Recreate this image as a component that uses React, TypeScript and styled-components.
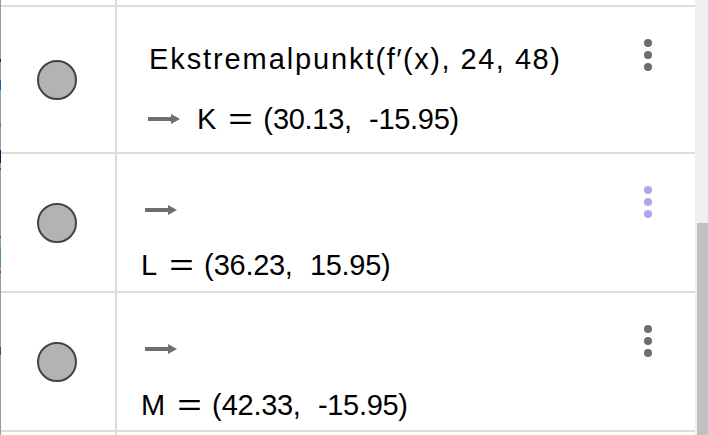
import styled, { createGlobalStyle } from 'styled-components';

const GlobalStyle = createGlobalStyle`
  html, body {
    margin: 0;
    padding: 0;
    background: #ffffff;
    overflow: hidden;
  }
  body {
    font-family: 'Liberation Sans', Arial, sans-serif;
  }
`;

const StyledView = styled.div`
  width: 708px;
  height: 435px;
  display: flex;
  overflow: hidden;
  background: #ffffff;
`;

const GraphEdge = styled.div`
  width: 1px;
  flex: none;
  background: linear-gradient(
    to bottom,
    #9c9c9c 0 59px,
    #14205a 59px 62px,
    #9c9c9c 62px 80px,
    #1d5fa8 80px 90px,
    #9c9c9c 90px 123px,
    #3e8f92 123px 127px,
    #9c9c9c 127px 150px,
    #0f1a50 150px 163px,
    #9c9c9c 163px 168px,
    #d02020 168px 170px,
    #9c9c9c 170px 236px,
    #d02020 236px 238px,
    #9c9c9c 238px 247px,
    #4d8fa0 247px 267px,
    #9c9c9c 267px 271px,
    #d02020 271px 273px,
    #9c9c9c 273px 347px,
    #1d4fa0 347px 355px,
    #9c9c9c 355px
  );
`;

const List = styled.div`
  flex: 1;
  display: flex;
  flex-direction: column;
`;

const Row = styled.div<{ $height: number }>`
  display: flex;
  height: ${({ $height }) => $height}px;
  flex: none;
  border-bottom: 2px solid #dcdcdc;

  &:last-child {
    border-bottom: none;
    flex: 1;
  }
`;

const MarbleCell = styled.div`
  width: 114px;
  flex: none;
  display: flex;
  align-items: center;
  justify-content: center;
  border-right: 2px solid #dcdcdc;
`;

const Marble = styled.div`
  width: 40px;
  height: 40px;
  box-sizing: border-box;
  border-radius: 50%;
  background: #b3b3b3;
  border: 2.5px solid #434343;
  margin-right: 2px;
`;

const Content = styled.div<{ $top: number }>`
  flex: 1;
  display: flex;
  flex-direction: column;
  padding: ${({ $top }) => $top}px 0 0 24px;
  font-size: 29px;
  line-height: 34px;
  color: #000000;
`;

const Line = styled.div<{ $indent?: number; $gap?: number }>`
  height: 34px;
  display: flex;
  align-items: center;
  white-space: pre;
  padding-left: ${({ $indent }) => $indent ?? 0}px;
  margin-top: ${({ $gap }) => $gap ?? 0}px;
`;

const Word = styled.span`
  letter-spacing: 1.9px;
`;

const Args = styled.span`
  letter-spacing: 1.5px;
`;

const Num = styled.span`
  letter-spacing: -0.3px;
`;

const Eq = styled.span`
  display: inline-block;
  margin: 0 14px 0 16px;
  transform: scaleX(1.45);
`;

const Sep = styled.span`
  margin-right: 17px;
`;

const ArrowWrap = styled.span`
  display: inline-flex;
  margin-right: 17px;
`;

const MenuCell = styled.div`
  width: 94px;
  flex: none;
  display: flex;
  flex-direction: column;
  align-items: center;
  padding-top: 32px;
  gap: 4px;
`;

const Dot = styled.span<{ $active?: boolean }>`
  width: 8px;
  height: 8px;
  border-radius: 50%;
  background: ${({ $active }) => ($active ? '#b0a6ec' : '#6d6d6d')};
`;

const Scrollbar = styled.div`
  width: 13px;
  flex: none;
  background: #f0f0f0;
  display: flex;
  flex-direction: column;
  align-items: flex-end;
`;

const Thumb = styled.div`
  width: 11px;
  margin-top: 223px;
  flex: 1;
  background: #c1c1c1;
`;

function Arrow() {
  return (
    <ArrowWrap>
      <svg width="32" height="12" viewBox="0 0 32 12">
        <rect x="0" y="4" width="24" height="4" fill="#6e6e6e" />
        <polygon points="23,1 32,6 23,11" fill="#6e6e6e" />
      </svg>
    </ArrowWrap>
  );
}

function Menu({ active }: { active?: boolean }) {
  return (
    <MenuCell>
      <Dot $active={active} />
      <Dot $active={active} />
      <Dot $active={active} />
    </MenuCell>
  );
}

type PointProps = {
  name: string;
  x: string;
  y: string;
};

function Point({ name, x, y }: PointProps) {
  return (
    <>
      {name}
      <Eq>=</Eq>(<Num>{x}</Num>,<Sep />
      <Num>{y}</Num>)
    </>
  );
}

type PointRowProps = PointProps & {
  active?: boolean;
  gap: number;
};

function PointRow({ active, gap, ...point }: PointRowProps) {
  return (
    <Row $height={137}>
      <MarbleCell>
        <Marble />
      </MarbleCell>
      <Content $top={39}>
        <Line $indent={4}>
          <Arrow />
        </Line>
        <Line $gap={gap}>
          <Point {...point} />
        </Line>
      </Content>
      <Menu active={active} />
    </Row>
  );
}

export default function App() {
  return (
    <>
      <GlobalStyle />
      <StyledView>
        <GraphEdge />
        <List>
          <Row $height={5}>
            <MarbleCell />
          </Row>
          <Row $height={145}>
            <MarbleCell>
              <Marble />
            </MarbleCell>
            <Content $top={35}>
              <Line $indent={8}>
                <Word>Ekstremalpunkt</Word>
                <Args>(f′(x), 24, 48)</Args>
              </Line>
              <Line $indent={7} $gap={26}>
                <Arrow />
                <Point name="K" x="30.13" y="-15.95" />
              </Line>
            </Content>
            <Menu />
          </Row>
          <PointRow name="L" x="36.23" y="15.95" gap={21} active />
          <PointRow name="M" x="42.33" y="-15.95" gap={22} />
          <Row $height={3}>
            <MarbleCell />
          </Row>
        </List>
        <Scrollbar>
          <Thumb />
        </Scrollbar>
      </StyledView>
    </>
  );
}
